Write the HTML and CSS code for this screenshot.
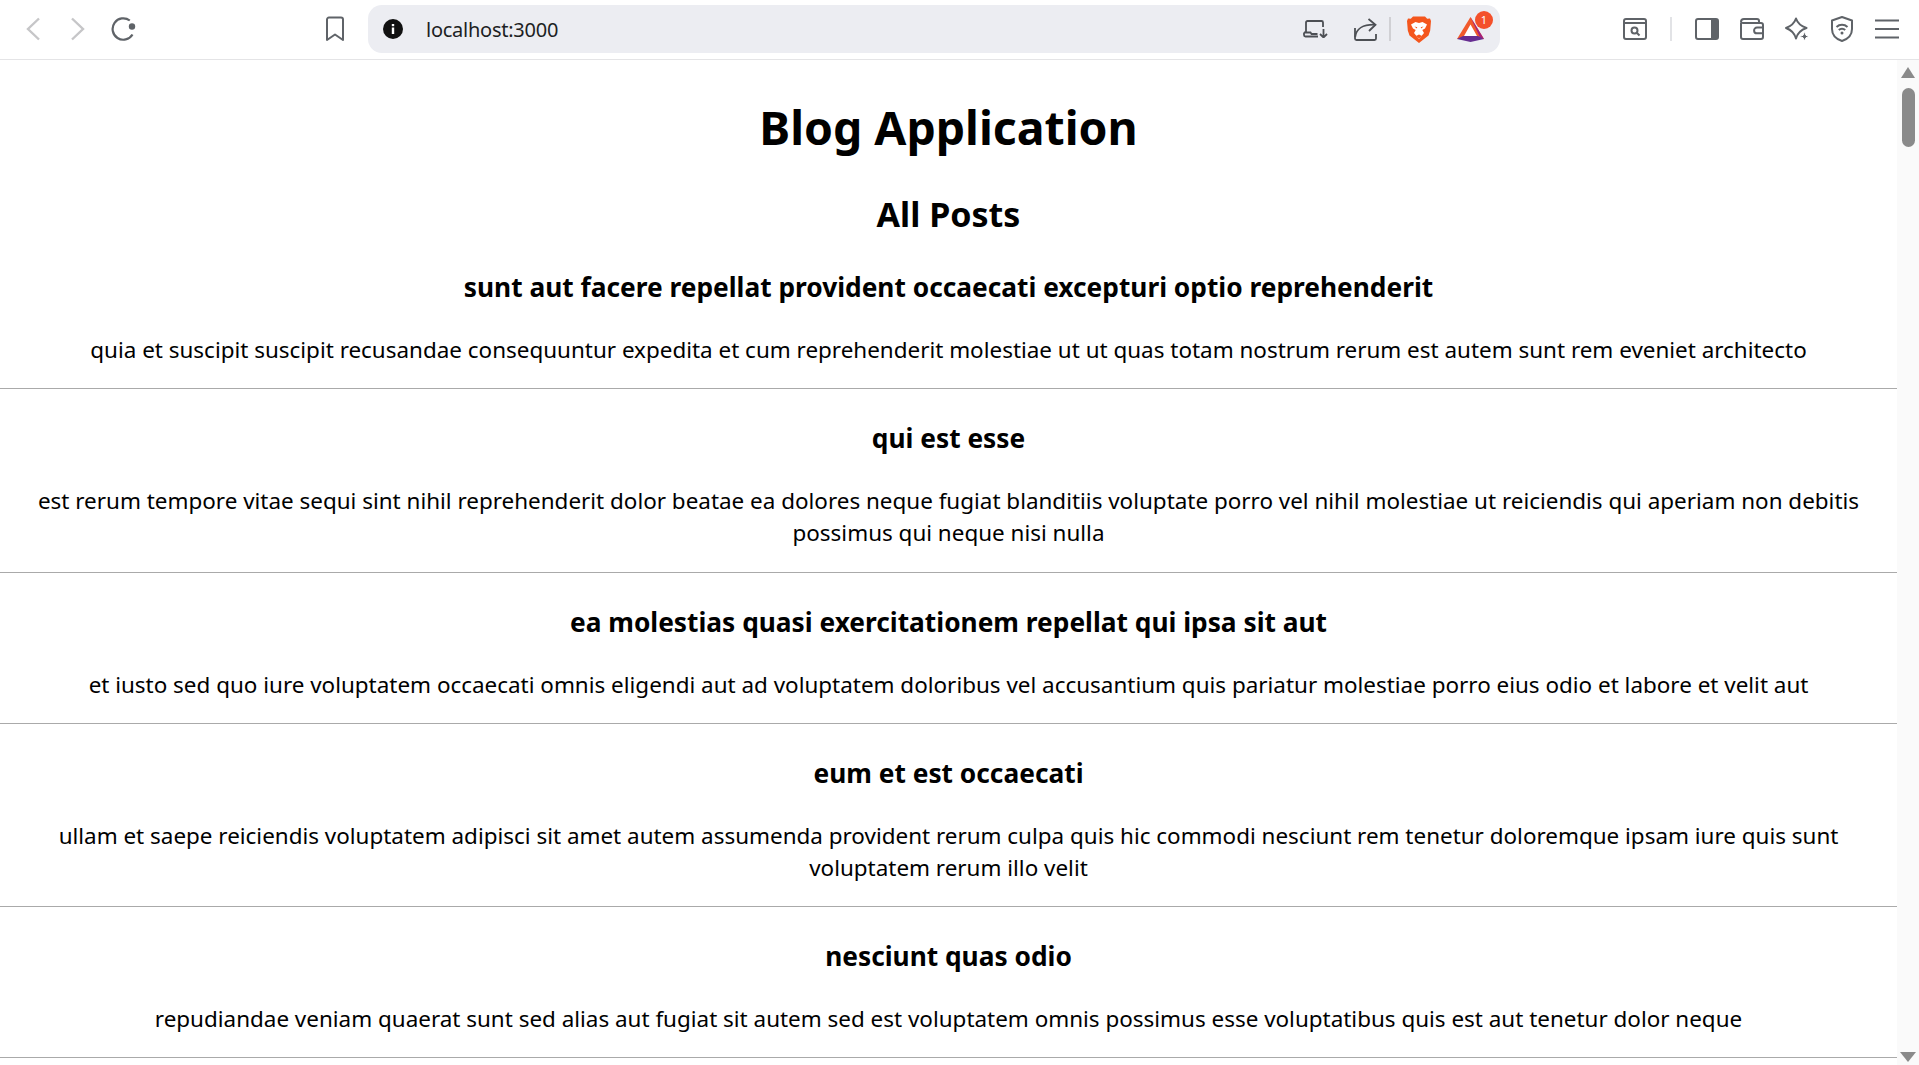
FILE: index.html
```html
<!DOCTYPE html>
<html lang="en">
<head>
<meta charset="utf-8">
<title>Blog Application</title>
<link rel="stylesheet" href="styles.css">
</head>
<body>
<header class="toolbar">
  <div class="nav">
    <svg width="14" height="24" viewBox="0 0 14 24"><path d="M13 1.500 2 12l11 10.500" fill="none" stroke="#c6c6c8" stroke-width="2.400"/></svg>
    <svg width="14" height="24" viewBox="0 0 14 24"><path d="M1 1.500 12 12 1 22.500" fill="none" stroke="#c6c6c8" stroke-width="2.400"/></svg>
    <svg width="27" height="24" viewBox="0 0 27 24"><path d="M19.800 3.500A10.700 10.700 0 1 0 22.500 17.500" fill="none" stroke="#5f6368" stroke-width="2.200"/><circle cx="22" cy="9.500" r="3.200" fill="#5f6368"/></svg>
  </div>
  <svg class="bookmark" width="20" height="26" viewBox="0 0 20 26"><path d="M2 3.500A2 2 0 0 1 4 1.500h12a2 2 0 0 1 2 2V24l-8-5.500L2 24z" fill="none" stroke="#5f6368" stroke-width="2" stroke-linejoin="round"/></svg>
  <div class="omnibox">
    <svg width="20" height="20" viewBox="0 0 20 20"><circle cx="10" cy="10" r="10" fill="#111"/><rect x="8.800" y="8.500" width="2.400" height="6.500" fill="#fff"/><rect x="8.800" y="5" width="2.400" height="2.200" fill="#fff"/></svg>
    <span class="url">localhost:3000</span>
    <span class="omni-actions">
      <svg width="25" height="18" viewBox="0 0 25 18"><path d="M3 12V2.500A1.500 1.500 0 0 1 4.500 1h14A1.500 1.500 0 0 1 20 2.500V7" fill="none" stroke="#4c4f54" stroke-width="1.800"/><path d="M1 12.500h6.500l1 1.500h6M1 12.500V15a1.500 1.500 0 0 0 1.500 1.500H15" fill="none" stroke="#4c4f54" stroke-width="1.800"/><path d="M20.500 9v8M17 14l3.500 3.500L24 14" fill="none" stroke="#4c4f54" stroke-width="1.800"/></svg>
      <svg width="23" height="23" viewBox="0 0 23 23"><path d="M1 10v10.500A1.500 1.500 0 0 0 2.500 22h18a1.500 1.500 0 0 0 1.500-1.500V16" fill="none" stroke="#4c4f54" stroke-width="1.800"/><path d="M1.200 19C2 11 9 6.500 20.500 6.700" fill="none" stroke="#4c4f54" stroke-width="1.800"/><path d="M14.500 1l7 5.700-6.500 6.300" fill="none" stroke="#4c4f54" stroke-width="1.800"/></svg>
      <i class="sep"></i>
      <svg width="24" height="27" viewBox="0 0 24 27"><path d="M6 .5h12l2.200 2.300 2.800-.3 1 2.500-.8 9.500-1.700 5L12 27l-9.500-7.500L.8 14.500 0 5l1-2.500 2.800.3z" fill="#f4561d"/><path d="M4 8.500 8.500 6 12 7l3.500-1L20 8.500l-2 4L15.300 14l1.700 3L12 23l-5-6 1.700-3L6 12.500z" fill="#fff"/><path d="M9 20l3-1.500 3 1.500-3 2.500z" fill="#f4561d"/><path d="M7.500 10.500l2.800.8-.6 1.200zM16.500 10.500l-2.800.8.600 1.200z" fill="#f4561d"/></svg>
      <span class="bat">
        <svg width="27" height="25" viewBox="0 0 27 25"><path d="M13.500 0 27 22H0z" fill="#f15a2c"/><path d="M13.500 0 27 22l-4-1.500z" fill="#a3217d"/><path d="M13.500 7.500 20 19H7z" fill="#fff"/><path d="M0 22l6-3h15l6 3-13.500 3z" fill="#662d91"/></svg>
        <b class="badge">1</b>
      </span>
    </span>
  </div>
  <div class="tools">
    <svg width="24" height="22" viewBox="0 0 24 22"><rect x="1" y="1" width="22" height="20" rx="2" fill="none" stroke="#5f6368" stroke-width="2"/><path d="M1 5h22" stroke="#5f6368" stroke-width="2"/><circle cx="11.500" cy="12.500" r="3" fill="none" stroke="#5f6368" stroke-width="2"/><path d="M14 15l2.500 2.500" stroke="#5f6368" stroke-width="2"/></svg>
    <i class="tool-sep"></i>
    <svg width="24" height="22" viewBox="0 0 24 22"><rect x="1" y="1" width="22" height="20" rx="2" fill="none" stroke="#5f6368" stroke-width="2"/><path d="M16 1h6a1 1 0 0 1 1 1v18a1 1 0 0 1-1 1h-6z" fill="#5f6368"/></svg>
    <svg width="24" height="22" viewBox="0 0 24 22"><path d="M1 5V19A2 2 0 0 0 3 21h18a2 2 0 0 0 2-2V7a2 2 0 0 0-2-2H3.500A2.500 2.500 0 0 1 1 4 3 3 0 0 1 4 1h13a2 2 0 0 1 2 2v2" fill="none" stroke="#5f6368" stroke-width="2"/><path d="M23 9.500h-6a2.900 2.900 0 0 0 0 5.800h6" fill="none" stroke="#5f6368" stroke-width="2"/></svg>
    <svg width="24" height="24" viewBox="0 0 24 24"><path d="M11 1.500C12.500 6 15.500 9 21.500 11 15.500 13 12.500 16 11 21.500 9.500 16 6.500 13 1 11 6.500 9 9.500 6 11 1.500z" fill="none" stroke="#5f6368" stroke-width="2" stroke-linejoin="round"/><path d="M19.500 14.500 21 18.300l3 1.200-3 1.200-1.500 3.300-1.500-3.300-4-1.200 4-1.200z" fill="#5f6368" stroke="#fff" stroke-width="1"/></svg>
    <svg width="24" height="26" viewBox="0 0 24 26"><path d="M12 1 22 4.500V13c0 6-4 10-10 12C6 23 2 19 2 13V4.500z" fill="none" stroke="#5f6368" stroke-width="2" stroke-linejoin="round"/><path d="M6.500 11a8 8 0 0 1 11 0M8.800 14a4.500 4.500 0 0 1 6.400 0" fill="none" stroke="#5f6368" stroke-width="2"/><circle cx="12" cy="17" r="1.500" fill="#5f6368"/></svg>
    <svg width="24" height="20" viewBox="0 0 24 20"><path d="M0 1.500h24M0 10h24M0 18.500h24" stroke="#5f6368" stroke-width="2.200"/></svg>
  </div>
</header>
<div class="viewport">
  <main class="page">
    <h1>Blog Application</h1>
    <h2>All Posts</h2>
    <article class="post">
      <h3>sunt aut facere repellat provident occaecati excepturi optio reprehenderit</h3>
      <p>quia et suscipit suscipit recusandae consequuntur expedita et cum reprehenderit molestiae ut ut quas totam nostrum rerum est autem sunt rem eveniet architecto</p>
    </article>
    <article class="post">
      <h3>qui est esse</h3>
      <p>est rerum tempore vitae sequi sint nihil reprehenderit dolor beatae ea dolores neque fugiat blanditiis voluptate porro vel nihil molestiae ut reiciendis qui aperiam non debitis possimus qui neque nisi nulla</p>
    </article>
    <article class="post">
      <h3>ea molestias quasi exercitationem repellat qui ipsa sit aut</h3>
      <p>et iusto sed quo iure voluptatem occaecati omnis eligendi aut ad voluptatem doloribus vel accusantium quis pariatur molestiae porro eius odio et labore et velit aut</p>
    </article>
    <article class="post">
      <h3>eum et est occaecati</h3>
      <p>ullam et saepe reiciendis voluptatem adipisci sit amet autem assumenda provident rerum culpa quis hic commodi nesciunt rem tenetur doloremque ipsam iure quis sunt voluptatem rerum illo velit</p>
    </article>
    <article class="post">
      <h3>nesciunt quas odio</h3>
      <p>repudiandae veniam quaerat sunt sed alias aut fugiat sit autem sed est voluptatem omnis possimus esse voluptatibus quis est aut tenetur dolor neque</p>
    </article>
  </main>
  <aside class="scrollbar">
    <i class="arrow-up"></i>
    <i class="thumb"></i>
    <i class="arrow-down"></i>
  </aside>
</div>
</body>
</html>
```

FILE: styles.css
```css
* { box-sizing: border-box; }
html, body { margin: 0; height: 100%; overflow: hidden; }
body {
  display: flex;
  flex-direction: column;
  background: #fff;
  color: #000;
  font-family: "Noto Sans", "Open Sans", sans-serif;
}
.toolbar {
  flex: none;
  height: 60px;
  display: flex;
  align-items: center;
  border-bottom: 1px solid #e4e4e6;
  padding: 0 0 1px 26px;
}
.toolbar svg { display: block; flex: none; }
.nav { display: flex; align-items: center; margin-right: 188px; }
.nav svg:nth-child(2) { margin: 0 25px 0 31px; }
.bookmark { margin-right: 23px; }
.omnibox {
  flex: none;
  width: 1132px;
  height: 48px;
  background: #ecedf2;
  border-radius: 14px;
  display: flex;
  align-items: center;
  padding: 0 16px 0 15px;
}
.url { margin-left: 23px; font-size: 20px; color: #1d1f24; letter-spacing: -.25px; }
.omni-actions { margin-left: auto; display: flex; align-items: center; }
.omni-actions > svg:nth-child(1) { margin-right: 26px; }
.omni-actions > svg:nth-child(2) { margin-right: 12px; }
.omni-actions > svg:nth-child(4) { margin: 0 26px 0 16px; }
.sep { width: 2px; height: 24px; background: #d0d0d4; }
.bat { position: relative; display: block; }
.badge {
  position: absolute; top: -6px; right: -9px;
  width: 18px; height: 18px; border-radius: 50%;
  background: #f4502a; color: #fff;
  font: 400 11px/18px "Noto Sans", sans-serif; text-align: center;
}
.tools { display: flex; align-items: center; gap: 21px; margin-left: 123px; }
.tool-sep { width: 2px; height: 24px; background: #e2e3e6; margin: 0 2px; }
.viewport { flex: 1; min-height: 0; display: flex; }
.page { flex: 1; min-width: 0; text-align: center; overflow: hidden; }
h1 { margin: 37px 0 0; font-size: 46.400px; line-height: 60px; font-weight: 700; }
h2 { margin: 33px 0 0; font-size: 34px; line-height: 48px; font-weight: 700; }
h3 { margin: 0; font-size: 26.300px; line-height: 36px; font-weight: 700; }
.post { padding: 31px 0 22.250px; border-bottom: 1px solid #aaa; }
.post p { margin: 29px 0 0; font-size: 22.450px; line-height: 32px; padding: 0 20px; }
.scrollbar { flex: none; width: 22px; background: #fafafa; display: flex; flex-direction: column; align-items: center; }
.arrow-up { margin-top: 7px; border: 7px solid transparent; border-top: 0; border-bottom: 11px solid #8a8a8a; }
.thumb { margin-top: 10px; width: 13px; height: 59px; border-radius: 7px; background: #8a8a8a; }
.arrow-down { margin-top: auto; margin-bottom: 3px; border: 8px solid transparent; border-bottom: 0; border-top: 10px solid #8a8a8a; }
```
